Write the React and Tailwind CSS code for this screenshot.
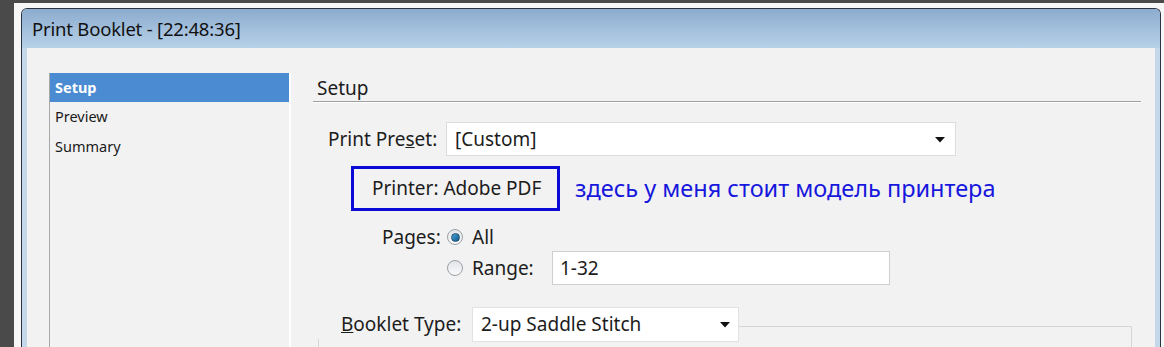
import React from 'react';

const font = { fontFamily: '"Noto Sans", "Open Sans", sans-serif' };

function Caret() {
  return (
    <svg width="12" height="7" viewBox="0 0 12 7" className="shrink-0">
      <path d="M1 1h10L6 6.5z" fill="#111" />
    </svg>
  );
}

function Radio({ checked }) {
  return (
    <div className="w-[16px] h-[16px] rounded-full border border-[#9aa0a6] bg-gradient-to-b from-[#e2e4e8] to-[#fafafa] flex items-center justify-center shrink-0">
      {checked && <div className="w-[9px] h-[9px] rounded-full bg-gradient-to-br from-[#4aa3d8] to-[#0d5a8c] border border-[#1d4f73]" />}
    </div>
  );
}

export default function App() {
  return (
    <div className="w-[1164px] h-[347px] bg-[#4a4a4a] pt-[3px] pl-[14px] overflow-hidden" style={font}>
      <div className="h-full bg-[#f7f7f7] pt-[5px] pl-[7px] pr-[3px]">
        <div className="h-full border border-b-0 border-[#2a3440] rounded-t-[6px] flex flex-col overflow-hidden">
          {/* title bar */}
          <div className="h-[39px] shrink-0 bg-gradient-to-b from-[#8caccf] to-[#b7d1e8] flex items-center pl-[10px] text-[18.5px] text-[#111] tracking-[-0.2px]">
            Print Booklet - [22:48:36]
          </div>
          <div className="flex-1 flex border-l-[5px] border-r-[5px] border-[#c4d8ea]">
            <div className="flex-1 flex bg-[#f2f2f2] pt-[25px] pl-[22px]">
              {/* left list */}
              <div className="w-[242px] shrink-0 border-l border-[#a8a8a8] border-r-2 border-r-white text-[14.5px] text-[#1a1a1a]">
                <div className="h-[29px] bg-[#4b8bd2] text-white font-bold flex items-center pl-[5px]">Setup</div>
                <div className="h-[30px] flex items-center pl-[5px]">Preview</div>
                <div className="h-[30px] flex items-center pl-[5px]">Summary</div>
              </div>
              {/* right panel */}
              <div className="flex-1 pl-[22px] pr-[14px] text-[19px] text-[#1c1c1c]">
                <div className="h-[28px] flex items-end pl-[4px] pb-[3px] leading-none">Setup</div>
                <div className="h-[1px] bg-[#a0a0a0] border-b border-white box-content" />
                <div className="flex items-center mt-[19px] ml-[15px]">
                  <span className="w-[118px]">Print Pre<span className="underline">s</span>et:</span>
                  <div className="w-[510px] h-[34px] bg-white border border-[#dcdcdc] flex items-center justify-between pl-[8px] pr-[9px]">
                    <span>[Custom]</span>
                    <Caret />
                  </div>
                </div>
                <div className="flex items-center mt-[10px] ml-[38px]">
                  <div className="w-[209px] h-[45px] border-[3px] border-[#0a0ad8] flex items-center pl-[18px]">Printer: Adobe PDF</div>
                  <span className="ml-[15px] text-[23.5px] text-[#1717dd]">здесь у меня стоит модель принтера</span>
                </div>
                <div className="flex items-center mt-[16px] ml-[69px] h-[20px]">
                  <span className="w-[65px]">Pages:</span>
                  <Radio checked />
                  <span className="ml-[9px]">All</span>
                </div>
                <div className="flex items-center mt-[4px] ml-[134px]">
                  <Radio />
                  <span className="ml-[9px] w-[80px]">Range:</span>
                  <div className="w-[338px] h-[34px] bg-white border border-[#cfcfcf] flex items-center pl-[7px]">1-32</div>
                </div>
                <div className="flex items-center mt-[22px] ml-[5px] relative">
                  <div className="absolute left-0 top-[19px] w-[814px] h-[30px] border border-[#d6d6d6] rounded-[2px] border-b-0" />
                  <span className="relative pl-[23px] w-[154px] bg-[#f2f2f2] whitespace-nowrap"><span className="underline">B</span>ooklet Type:</span>
                  <div className="relative w-[267px] h-[35px] bg-white border border-[#e2e2e2] flex items-center justify-between pl-[8px] pr-[7px]">
                    <span>2-up Saddle Stitch</span>
                    <Caret />
                  </div>
                </div>
              </div>
            </div>
          </div>
        </div>
      </div>
    </div>
  );
}
